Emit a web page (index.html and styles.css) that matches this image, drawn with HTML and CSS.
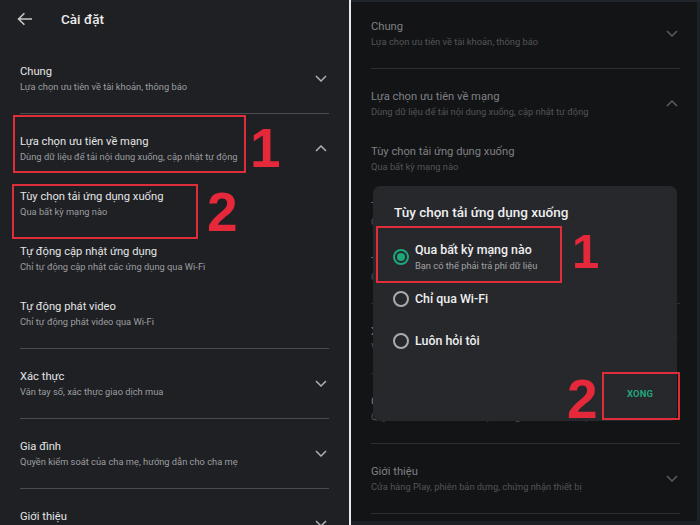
FILE: index.html
```html
<!DOCTYPE html>
<html lang="vi">
<head>
<meta charset="utf-8">
<title>Cài đặt</title>
<link rel="stylesheet" href="styles.css">
</head>
<body>
<div class="screen">
  <section class="panel panel-left">
    <header class="topbar">
      <svg class="back" width="16" height="14" viewBox="0 0 16 14"><path d="M15 7H1.8M7.4 1.2L1.6 7l5.8 5.8" fill="none" stroke="currentColor" stroke-width="1.6"/></svg>
      <h1 class="page-title">Cài đặt</h1>
    </header>
    <div class="list">
      <div class="row"><div class="text"><div class="title">Chung</div><div class="sub">Lựa chọn ưu tiên về tài khoản, thông báo</div></div><svg class="chev" width="12" height="7" viewBox="0 0 12 7"><polyline points="1,1 6,6 11,1"/></svg></div>
      <div class="divider"></div>
      <div class="row"><div class="text"><div class="title">Lựa chọn ưu tiên về mạng</div><div class="sub">Dùng dữ liệu để tải nội dung xuống, cập nhật tự động</div></div><svg class="chev" width="12" height="7" viewBox="0 0 12 7"><polyline points="1,6 6,1 11,6"/></svg></div>
      <div class="row"><div class="text"><div class="title">Tùy chọn tải ứng dụng xuống</div><div class="sub">Qua bất kỳ mạng nào</div></div></div>
      <div class="row"><div class="text"><div class="title">Tự động cập nhật ứng dụng</div><div class="sub">Chỉ tự động cập nhật các ứng dụng qua Wi-Fi</div></div></div>
      <div class="row"><div class="text"><div class="title">Tự động phát video</div><div class="sub">Chỉ tự động phát video qua Wi-Fi</div></div></div>
      <div class="divider"></div>
      <div class="row"><div class="text"><div class="title">Xác thực</div><div class="sub">Vân tay số, xác thực giao dịch mua</div></div><svg class="chev" width="12" height="7" viewBox="0 0 12 7"><polyline points="1,1 6,6 11,1"/></svg></div>
      <div class="divider"></div>
      <div class="row"><div class="text"><div class="title">Gia đình</div><div class="sub">Quyền kiểm soát của cha mẹ, hướng dẫn cho cha mẹ</div></div><svg class="chev" width="12" height="7" viewBox="0 0 12 7"><polyline points="1,1 6,6 11,1"/></svg></div>
      <div class="divider"></div>
      <div class="row"><div class="text"><div class="title">Giới thiệu</div><div class="sub">Cửa hàng Play, phiên bản dựng, chứng nhận thiết bị</div></div><svg class="chev" width="12" height="7" viewBox="0 0 12 7"><polyline points="1,1 6,6 11,1"/></svg></div>
    </div>
    <div class="mark box-l1"></div>
    <div class="num num-l1">1</div>
    <div class="mark box-l2"></div>
    <div class="num num-l2">2</div>
  </section>

  <div class="split"></div>

  <section class="panel panel-right">
    <div class="list dim">
      <div class="row"><div class="text"><div class="title">Chung</div><div class="sub">Lựa chọn ưu tiên về tài khoản, thông báo</div></div><svg class="chev" width="12" height="7" viewBox="0 0 12 7"><polyline points="1,1 6,6 11,1"/></svg></div>
      <div class="divider"></div>
      <div class="row"><div class="text"><div class="title">Lựa chọn ưu tiên về mạng</div><div class="sub">Dùng dữ liệu để tải nội dung xuống, cập nhật tự động</div></div><svg class="chev" width="12" height="7" viewBox="0 0 12 7"><polyline points="1,6 6,1 11,6"/></svg></div>
      <div class="row"><div class="text"><div class="title">Tùy chọn tải ứng dụng xuống</div><div class="sub">Qua bất kỳ mạng nào</div></div></div>
      <div class="row"><div class="text"><div class="title">Tự động cập nhật ứng dụng</div><div class="sub">Chỉ tự động cập nhật các ứng dụng qua Wi-Fi</div></div></div>
      <div class="row"><div class="text"><div class="title">Tự động phát video</div><div class="sub">Chỉ tự động phát video qua Wi-Fi</div></div></div>
      <div class="divider"></div>
      <div class="row"><div class="text"><div class="title">Xác thực</div><div class="sub">Vân tay số, xác thực giao dịch mua</div></div><svg class="chev" width="12" height="7" viewBox="0 0 12 7"><polyline points="1,1 6,6 11,1"/></svg></div>
      <div class="divider"></div>
      <div class="row"><div class="text"><div class="title">Gia đình</div><div class="sub">Quyền kiểm soát của cha mẹ, hướng dẫn cho cha mẹ</div></div><svg class="chev" width="12" height="7" viewBox="0 0 12 7"><polyline points="1,1 6,6 11,1"/></svg></div>
      <div class="divider"></div>
      <div class="row"><div class="text"><div class="title">Giới thiệu</div><div class="sub">Cửa hàng Play, phiên bản dựng, chứng nhận thiết bị</div></div><svg class="chev" width="12" height="7" viewBox="0 0 12 7"><polyline points="1,1 6,6 11,1"/></svg></div>
      <div class="divider"></div>
    </div>

    <div class="dialog">
      <h2 class="dialog-title">Tùy chọn tải ứng dụng xuống</h2>
      <div class="options">
        <div class="option"><span class="radio on"></span><div class="opt-text"><div class="opt-label">Qua bất kỳ mạng nào</div><div class="opt-sub">Bạn có thể phải trả phí dữ liệu</div></div></div>
        <div class="option"><span class="radio"></span><div class="opt-text"><div class="opt-label">Chỉ qua Wi-Fi</div></div></div>
        <div class="option option-last"><span class="radio"></span><div class="opt-text"><div class="opt-label">Luôn hỏi tôi</div></div></div>
      </div>
      <div class="actions"><span class="btn">XONG</span></div>
    </div>

    <div class="mark box-r1"></div>
    <div class="num num-r1">1</div>
    <div class="mark box-r2"></div>
    <div class="num num-r2">2</div>
  </section>
</div>
</body>
</html>
```
FILE: styles.css
```css
* { box-sizing: border-box; margin: 0; padding: 0; }

body {
  margin: 0;
  background: #16181b;
  font-family: Roboto, "Noto Sans", "Liberation Sans", sans-serif;
}

.screen {
  display: flex;
  width: 700px;
  height: 525px;
  overflow: hidden;
}

.panel {
  position: relative;
  width: 349px;
  height: 525px;
  overflow: hidden;
  padding: 0 20px;
}

.panel-left { background: #1f2023; }

.split { width: 2px; background: #e9e9ea; }

.panel-right {
  background: #131416;
  padding-top: 6px;
  box-shadow: inset 0 2px 0 #20262b, inset -3px 0 0 #1c2227, inset 0 -4px 0 #1c2227;
}

.topbar {
  display: flex;
  align-items: center;
  height: 51px;
  padding-bottom: 13px;
  color: #c7c8ca;
}

.back { margin-left: -3px; }

.page-title {
  margin-left: 28px;
  font-size: 13.5px;
  font-weight: 500;
  color: #ececed;
}

.list { display: flex; flex-direction: column; }

.row {
  display: flex;
  align-items: center;
  justify-content: space-between;
  height: 55px;
  flex-shrink: 0;
}

.title {
  font-size: 11.2px;
  line-height: 15px;
  color: #e4e5e6;
}

.sub {
  font-size: 9.3px;
  line-height: 15px;
  color: #9c9ea1;
}

.chev {
  margin-right: 2px;
  fill: none;
  stroke: #aeb0b3;
  stroke-width: 1.5;
}

.divider {
  height: 1px;
  margin: 7px 0;
  background: #4a4c50;
  flex-shrink: 0;
}

.dim .title { color: #7f8083; }
.dim .sub { color: #545558; }
.dim .chev { stroke: #5c5d60; }
.dim .divider { background: #2c2d30; }

/* dialog */
.dialog {
  position: absolute;
  left: 22px;
  top: 186px;
  width: 304px;
  height: 235px;
  background: #27282c;
  border-radius: 7px;
  display: flex;
  flex-direction: column;
  padding: 16px 0 9px 0;
}

.dialog-title {
  margin-left: 21px;
  font-size: 13.5px;
  line-height: 20px;
  font-weight: 500;
  color: #eeeff0;
  margin-bottom: 14px;
}

.options { display: flex; flex-direction: column; }

.option {
  display: flex;
  align-items: center;
  gap: 6px;
  height: 42px;
  padding-left: 20px;
}
.option-last { height: 41px; }

.radio {
  width: 16px;
  height: 16px;
  border-radius: 50%;
  border: 2px solid #a9abad;
  display: flex;
  align-items: center;
  justify-content: center;
  flex-shrink: 0;
}

.radio.on { border-color: #1fa77c; }
.radio.on::after {
  content: "";
  width: 8px;
  height: 8px;
  border-radius: 50%;
  background: #1fa77c;
}

.opt-label {
  font-size: 12.4px;
  line-height: 16px;
  font-weight: 500;
  color: #eeeff0;
}

.opt-sub {
  font-size: 9.3px;
  line-height: 15px;
  color: #a2a4a7;
}

.actions {
  margin-top: auto;
  display: flex;
  justify-content: flex-end;
  padding-right: 7px;
}

.btn {
  width: 60px;
  height: 36px;
  line-height: 36px;
  text-align: center;
  font-size: 9.4px;
  font-weight: 700;
  letter-spacing: 0.2px;
  color: #22a57b;
}

/* annotations overlay */
.mark {
  position: absolute;
  border: 2px solid #e02d3a;
}

.num {
  position: absolute;
  font-family: "Liberation Sans", Arial, sans-serif;
  font-weight: 700;
  font-size: 55px;
  line-height: 1;
  color: #e5283a;
}

.box-l1 { left: 13px; top: 115px; width: 233px; height: 58px; }
.num-l1 { left: 250px; top: 121px; }
.box-l2 { left: 12px; top: 184px; width: 186px; height: 55px; }
.num-l2 { left: 207px; top: 185px; }

.box-r1 { left: 25px; top: 226px; width: 186px; height: 57px; }
.num-r1 { left: 221px; top: 227px; font-size: 49px; }
.box-r2 { left: 251px; top: 372px; width: 78px; height: 48px; }
.num-r2 { left: 216px; top: 372px; }
```
